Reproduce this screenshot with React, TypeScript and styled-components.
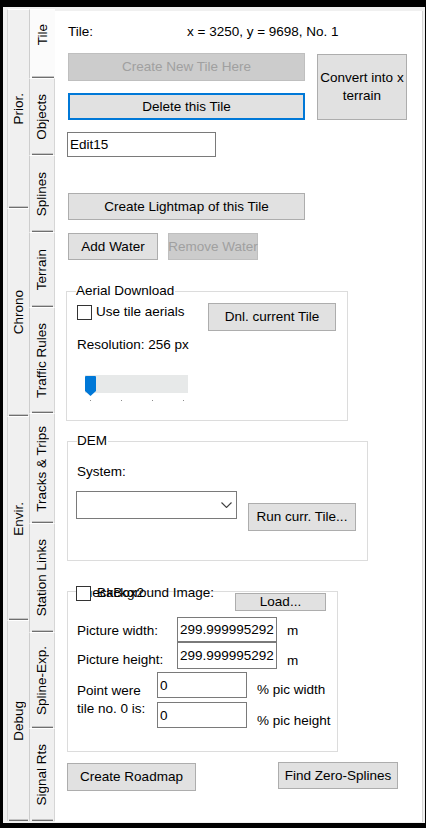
import React from "react";
import styled, { createGlobalStyle } from "styled-components";

const GlobalStyle = createGlobalStyle`
  html, body { margin: 0; padding: 0; background: #000; }
  body {
    font-family: "Liberation Sans", Arial, sans-serif;
    font-size: 13.5px;
    line-height: 16px;
    color: #000;
  }
  * { box-sizing: border-box; }
`;

const Window = styled.div`
  margin: 7px 0 0 3px;
  width: 422px;
  height: 816px;
  background: #f0f0f0;
  display: flex;
  overflow: hidden;
`;

const OuterStrip = styled.div`
  width: 26px;
  padding: 2px 0 0 4px;
  display: flex;
  flex-direction: column;
`;

const OuterTab = styled.div<{ $h: number }>`
  position: relative;
  height: ${(p) => p.$h}px;
  border-left: 1px solid #d4d4d4;
  border-top: 1px solid #ffffff;
  display: flex;
  align-items: center;
  justify-content: center;
  &::after {
    content: "";
    position: absolute;
    left: 1px;
    right: 1px;
    bottom: 0;
    height: 1px;
    background: #6f6f6f;
  }
  &::before {
    content: "";
    position: absolute;
    left: 1px;
    right: 1px;
    bottom: 1px;
    height: 1px;
    background: #c4c4c4;
  }
`;

const InnerStrip = styled.div`
  width: 26px;
  padding-top: 2px;
  display: flex;
  flex-direction: column;
`;

const InnerTab = styled.div<{ $h: number; $active?: boolean; $shift?: number }>`
  position: relative;
  height: ${(p) => p.$h}px;
  background: ${(p) => (p.$active ? "#fbfbfb" : "#f0f0f0")};
  border-left: 1px solid #cdcdcd;
  border-top: 1px solid #ffffff;
  border-right: ${(p) => (p.$active ? "none" : "1px solid #d6d6d6")};
  padding-bottom: ${(p) => p.$shift ?? 0}px;
  display: flex;
  align-items: center;
  justify-content: center;
  &::after {
    content: "";
    position: absolute;
    left: 2px;
    right: 1px;
    bottom: 0;
    height: 1px;
    background: #6f6f6f;
  }
  &::before {
    content: "";
    position: absolute;
    left: 2px;
    right: 1px;
    bottom: 1px;
    height: 1px;
    background: #c4c4c4;
  }
`;

const VLabel = styled.span`
  writing-mode: vertical-rl;
  transform: rotate(180deg);
  white-space: nowrap;
  line-height: 16px;
`;

const Page = styled.div`
  flex: 1;
  margin: 4px 2px 1px 0;
  background: #ffffff;
  border-right: 1px solid #d4d4d4;
  padding: 13px 0 0 12px;
  display: flex;
  flex-direction: column;
  align-items: flex-start;
`;

const InfoRow = styled.div`
  display: flex;
  margin-left: 1px;
`;

const InfoLabel = styled.span`
  width: 119px;
`;

const Button = styled.button<{ $w: number; $h: number; $focused?: boolean; $lines?: boolean }>`
  width: ${(p) => p.$w}px;
  height: ${(p) => p.$h}px;
  padding: 0;
  font: inherit;
  line-height: ${(p) => (p.$lines ? "18px" : "16px")};
  color: #000;
  background: #e1e1e1;
  border: ${(p) => (p.$focused ? "2px solid #0078d7" : "1px solid #adadad")};
  border-radius: 0;
  display: flex;
  align-items: center;
  justify-content: center;
  text-align: center;
  white-space: nowrap;
  flex-shrink: 0;
  &:disabled {
    background: #cccccc;
    border-color: #bfbfbf;
    color: #a0a0a0;
  }
`;

const TopButtons = styled.div`
  display: flex;
  gap: 12px;
  margin: 13px 0 0 1px;
  align-items: flex-start;
`;

const ButtonStack = styled.div`
  display: flex;
  flex-direction: column;
  gap: 12px;
`;

const ConvertWrap = styled.div`
  margin-top: 1px;
`;

const TextBox = styled.input<{ $w: number; $h: number }>`
  width: ${(p) => p.$w}px;
  height: ${(p) => p.$h}px;
  border: 1px solid #7a7a7a;
  background: #fff;
  font: inherit;
  color: #000;
  padding: 0 2px;
  margin: 0;
  outline: none;
  border-radius: 0;
`;

const Spacer = styled.div<{ $h: number; $ml?: number }>`
  margin-top: ${(p) => p.$h}px;
  margin-left: ${(p) => p.$ml ?? 0}px;
  display: flex;
  align-items: flex-start;
`;

const WaterRow = styled.div`
  display: flex;
  gap: 10px;
  margin: 13px 0 0 1px;
`;

const GroupBox = styled.div<{ $w: number; $h: number; $mt: number; $ml?: number }>`
  position: relative;
  width: ${(p) => p.$w}px;
  height: ${(p) => p.$h}px;
  margin-top: ${(p) => p.$mt}px;
  margin-left: ${(p) => p.$ml ?? 0}px;
  border: 1px solid #dcdcdc;
  display: flex;
  flex-direction: column;
  align-items: flex-start;
`;

const GroupTitle = styled.span`
  position: absolute;
  top: -9px;
  left: 9px;
  padding: 0 1px 0 0;
  background: #fff;
  line-height: 16px;
`;

const AerialTop = styled.div`
  align-self: stretch;
  display: flex;
  align-items: flex-start;
  margin-top: 11px;
  padding: 0 11px 0 10px;
`;

const CheckRow = styled.label`
  display: flex;
  align-items: center;
  gap: 4px;
  margin-top: 1px;
`;

const CheckSquare = styled.span`
  width: 15px;
  height: 15px;
  border: 1px solid #333;
  background: #fff;
  display: block;
  flex-shrink: 0;
`;

const PushRight = styled.div`
  margin-left: auto;
`;

const TextLine = styled.span<{ $mt: number; $pl: number }>`
  margin-top: ${(p) => p.$mt}px;
  padding-left: ${(p) => p.$pl}px;
  white-space: nowrap;
`;

const SliderBox = styled.div`
  margin: 22px 0 0 18px;
  display: flex;
  flex-direction: column;
`;

const SliderTrack = styled.div`
  width: 103px;
  height: 18px;
  background: #e7e9e9;
  display: flex;
  align-items: flex-start;
  svg { margin-top: 1px; display: block; }
`;

const Ticks = styled.div`
  width: 103px;
  margin-top: 7px;
  padding: 0 4px 0 5px;
  display: flex;
  justify-content: space-between;
`;

const Tick = styled.span`
  width: 1px;
  height: 1px;
  background: #8c8c8c;
  display: block;
`;

const DemRow = styled.div`
  display: flex;
  align-items: flex-start;
  gap: 11px;
  margin: 11px 0 0 8px;
`;

const Combo = styled.div`
  width: 161px;
  height: 28px;
  border: 1px solid #7a7a7a;
  background: #fff;
  display: flex;
  align-items: center;
  justify-content: flex-end;
  padding-right: 4px;
`;

const RunWrap = styled.div`
  margin-top: 12px;
`;

const BgLegend = styled.div`
  position: absolute;
  top: -7px;
  left: 8px;
  display: grid;
  align-items: center;
  & > * { grid-area: 1 / 1; }
`;

const OverText = styled.span<{ $ml: number }>`
  margin-left: ${(p) => p.$ml}px;
  white-space: nowrap;
  line-height: 16px;
`;

const LegendBox = styled(CheckSquare)`
  position: relative;
  z-index: 1;
`;

const LoadRow = styled.div`
  align-self: stretch;
  display: flex;
  justify-content: flex-end;
  margin-top: 1px;
  padding-right: 11px;
`;

const SizeRow = styled.div<{ $mt: number }>`
  display: flex;
  align-items: flex-start;
  margin-top: ${(p) => p.$mt}px;
  padding-left: 9px;
`;

const FieldLabel = styled.span<{ $mt: number }>`
  width: 100px;
  margin-top: ${(p) => p.$mt}px;
  white-space: nowrap;
`;

const Unit = styled.span<{ $mt: number }>`
  margin: ${(p) => p.$mt}px 0 0 10px;
  white-space: nowrap;
`;

const PointGrid = styled.div`
  display: grid;
  grid-template-columns: 80px 90px auto;
  grid-template-rows: 26px 26px;
  row-gap: 4px;
  margin-top: 3px;
  padding-left: 9px;
`;

const PointLabel = styled.span`
  grid-row: 1 / 3;
  grid-column: 1;
  margin-top: 10px;
  line-height: 18px;
`;

const GridUnit = styled.span<{ $row: number; $mt: number }>`
  grid-row: ${(p) => p.$row};
  grid-column: 3;
  margin: ${(p) => p.$mt}px 0 0 10px;
  white-space: nowrap;
`;

const GridBox = styled(TextBox)<{ $row: number }>`
  grid-row: ${(p) => p.$row};
  grid-column: 2;
`;

const BottomRow = styled.div`
  display: flex;
  align-items: flex-start;
  margin-top: 11px;
`;

const FindWrap = styled.div`
  margin: -1px 0 0 82px;
`;

const outerTabs = [
  { label: "Prior.", h: 199 },
  { label: "Chrono", h: 208 },
  { label: "Envir.", h: 204 },
  { label: "Debug", h: 201 },
];

const innerTabs: { label: string; h: number; active?: boolean; shift?: number }[] = [
  { label: "Tile", h: 69, active: true, shift: 19 },
  { label: "Objects", h: 77 },
  { label: "Splines", h: 77 },
  { label: "Terrain", h: 75 },
  { label: "Traffic Rules", h: 106 },
  { label: "Tracks & Trips", h: 110 },
  { label: "Station Links", h: 109 },
  { label: "Spline-Exp.", h: 96 },
  { label: "Signal Rts", h: 93 },
];

const SliderThumb = () => (
  <svg width="11" height="20" viewBox="0 0 11 20">
    <path d="M0 1 Q0 0 1 0 H10 Q11 0 11 1 V15 L5.5 20 L0 15 Z" fill="#0078d7" />
  </svg>
);

const Chevron = () => (
  <svg width="11" height="6" viewBox="0 0 11 6">
    <path d="M0.5 0.5 L5.5 5.5 L10.5 0.5" stroke="#404040" strokeWidth="1.1" fill="none" />
  </svg>
);

export default function App() {
  return (
    <>
      <GlobalStyle />
      <Window>
        <OuterStrip>
          {outerTabs.map((t) => (
            <OuterTab key={t.label} $h={t.h}>
              <VLabel>{t.label}</VLabel>
            </OuterTab>
          ))}
        </OuterStrip>
        <InnerStrip>
          {innerTabs.map((t) => (
            <InnerTab key={t.label} $h={t.h} $active={t.active} $shift={t.shift}>
              <VLabel>{t.label}</VLabel>
            </InnerTab>
          ))}
        </InnerStrip>
        <Page>
          <InfoRow>
            <InfoLabel>Tile:</InfoLabel>
            <span>x = 3250, y = 9698, No. 1</span>
          </InfoRow>

          <TopButtons>
            <ButtonStack>
              <Button $w={237} $h={28} disabled>
                Create New Tile Here
              </Button>
              <Button $w={237} $h={27} $focused>
                Delete this Tile
              </Button>
            </ButtonStack>
            <ConvertWrap>
              <Button $w={90} $h={66} $lines>
                Convert into x
                <br />
                terrain
              </Button>
            </ConvertWrap>
          </TopButtons>

          <Spacer $h={12}>
            <TextBox $w={149} $h={25} defaultValue="Edit15" />
          </Spacer>

          <Spacer $h={36} $ml={1}>
            <Button $w={237} $h={27}>Create Lightmap of this Tile</Button>
          </Spacer>

          <WaterRow>
            <Button $w={90} $h={27}>Add Water</Button>
            <Button $w={90} $h={27} disabled>
              Remove Water
            </Button>
          </WaterRow>

          <GroupBox $w={282} $h={130} $mt={31} $ml={-1}>
            <GroupTitle>Aerial Download</GroupTitle>
            <AerialTop>
              <CheckRow>
                <CheckSquare />
                <span>Use tile aerials</span>
              </CheckRow>
              <PushRight>
                <Button $w={128} $h={28}>Dnl. current Tile</Button>
              </PushRight>
            </AerialTop>
            <TextLine $mt={6} $pl={10}>Resolution: 256 px</TextLine>
            <SliderBox>
              <SliderTrack>
                <SliderThumb />
              </SliderTrack>
              <Ticks>
                <Tick />
                <Tick />
                <Tick />
                <Tick />
              </Ticks>
            </SliderBox>
          </GroupBox>

          <GroupBox $w={301} $h={120} $mt={20}>
            <GroupTitle>DEM</GroupTitle>
            <TextLine $mt={22} $pl={9}>System:</TextLine>
            <DemRow>
              <Combo>
                <Chevron />
              </Combo>
              <RunWrap>
                <Button $w={108} $h={28}>Run curr. Tile...</Button>
              </RunWrap>
            </DemRow>
          </GroupBox>

          <GroupBox $w={271} $h={161} $mt={30}>
            <BgLegend>
              <OverText $ml={2}>checkBox2</OverText>
              <LegendBox />
              <OverText $ml={21}>Background Image:</OverText>
            </BgLegend>
            <LoadRow>
              <Button $w={91} $h={18}>Load...</Button>
            </LoadRow>
            <SizeRow $mt={6}>
              <FieldLabel $mt={6}>Picture width:</FieldLabel>
              <TextBox $w={100} $h={25} defaultValue="299.999995292" />
              <Unit $mt={6}>m</Unit>
            </SizeRow>
            <SizeRow $mt={0}>
              <FieldLabel $mt={10}>Picture height:</FieldLabel>
              <TextBox $w={100} $h={27} defaultValue="299.999995292" />
              <Unit $mt={11}>m</Unit>
            </SizeRow>
            <PointGrid>
              <PointLabel>
                Point were
                <br />
                tile no. 0 is:
              </PointLabel>
              <GridBox $row={1} $w={90} $h={26} defaultValue="0" />
              <GridUnit $row={1} $mt={10}>% pic width</GridUnit>
              <GridBox $row={2} $w={90} $h={26} defaultValue="0" />
              <GridUnit $row={2} $mt={11}>% pic height</GridUnit>
            </PointGrid>
          </GroupBox>

          <BottomRow>
            <Button $w={129} $h={28}>Create Roadmap</Button>
            <FindWrap>
              <Button $w={120} $h={27}>Find Zero-Splines</Button>
            </FindWrap>
          </BottomRow>
        </Page>
      </Window>
    </>
  );
}
